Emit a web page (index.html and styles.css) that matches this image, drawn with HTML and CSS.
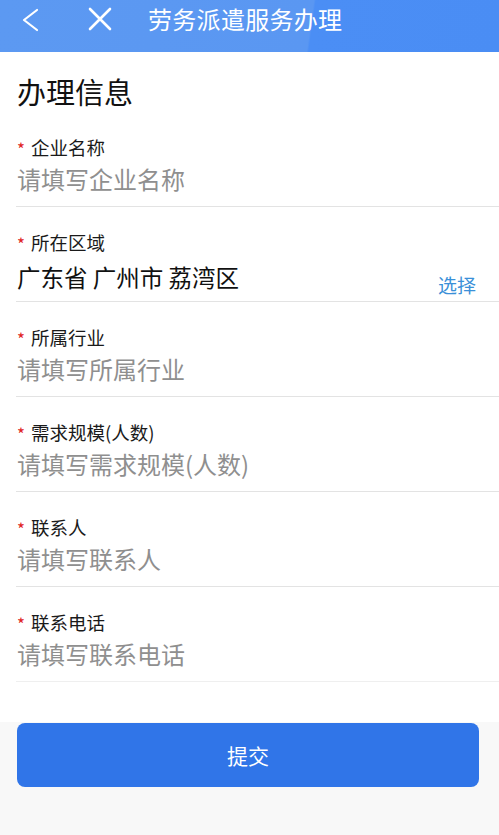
FILE: index.html
```html
<!DOCTYPE html>
<html lang="zh-CN">
<head>
<meta charset="utf-8">
<title>劳务派遣服务办理</title>
<link rel="stylesheet" href="styles.css">
</head>
<body>
<header class="topbar">
  <span class="icon back"><svg width="20" height="24" viewBox="0 0 20 24"><path d="M16 2 L3 12 L16 22" fill="none" stroke="#fff" stroke-width="2.2" stroke-linecap="round" stroke-linejoin="round"/></svg></span>
  <span class="icon close"><svg width="24" height="24" viewBox="0 0 24 24"><path d="M2 2 L22 22 M22 2 L2 22" fill="none" stroke="#fff" stroke-width="2.6" stroke-linecap="round"/></svg></span>
  <h1 class="topbar-title">劳务派遣服务办理</h1>
</header>
<main class="form">
  <h2 class="section-title">办理信息</h2>
  <div class="row">
    <div class="label"><span class="star">*</span>企业名称</div>
    <input class="field" type="text" placeholder="请填写企业名称">
  </div>
  <div class="row">
    <div class="label"><span class="star">*</span>所在区域</div>
    <div class="value-line">
      <span class="value">广东省 广州市 荔湾区</span>
      <span class="pick">选择</span>
    </div>
  </div>
  <div class="row">
    <div class="label"><span class="star">*</span>所属行业</div>
    <input class="field" type="text" placeholder="请填写所属行业">
  </div>
  <div class="row">
    <div class="label"><span class="star">*</span>需求规模(人数)</div>
    <input class="field" type="text" placeholder="请填写需求规模(人数)">
  </div>
  <div class="row">
    <div class="label"><span class="star">*</span>联系人</div>
    <input class="field" type="text" placeholder="请填写联系人">
  </div>
  <div class="row last">
    <div class="label"><span class="star">*</span>联系电话</div>
    <input class="field" type="text" placeholder="请填写联系电话">
  </div>
</main>
<div class="actions">
  <button class="submit" type="button">提交</button>
</div>
</body>
</html>
```

FILE: styles.css
```css
* { box-sizing: border-box; }
html, body { margin: 0; padding: 0; }
body {
  background: #f8f8f8;
  font-family: "Noto Sans CJK SC", "Noto Sans", sans-serif;
  color: #111;
  min-height: 835px;
}
.topbar {
  height: 52px;
  display: flex;
  align-items: center;
  background: linear-gradient(98deg, #5c99f2 0%, #5a97f2 62%, #4b8ef5 62.4%, #4a8df4 100%);
  color: #fff;
  padding-left: 21px;
}
.icon { display: flex; align-items: center; }
.back { width: 20px; height: 24px; margin-top: -12px; }
.close { width: 24px; height: 24px; margin-left: 47px; margin-top: -14px; }
.topbar-title {
  margin: -14px 0 0 36px;
  font-size: 24px;
  font-weight: 400;
  line-height: 30px;
  letter-spacing: 0.3px;
}
.form {
  background: #fff;
  padding-bottom: 40px;
}
.section-title {
  margin: 0;
  padding: 21px 17px 3px;
  font-size: 29px;
  font-weight: 400;
  line-height: 36px;
  color: #111;
}
.row {
  margin-left: 16px;
  padding: 22px 0 0 1px;
  height: 95px;
  border-bottom: 1px solid #e3e3e3;
}
.row.last { border-bottom-color: #efefef; }
.label {
  font-size: 18.5px;
  line-height: 26px;
  color: #1a1a1a;
  display: flex;
  align-items: flex-start;
}
.star {
  color: #e02424;
  font-size: 17px;
  line-height: 20px;
  width: 14px;
  margin-top: 5px;
}
.field {
  display: block;
  width: 100%;
  border: 0;
  outline: 0;
  padding: 0;
  margin-top: 1px;
  height: 34px;
  font-family: inherit;
  font-size: 24px;
  color: #111;
  background: transparent;
}
.field::placeholder { color: #8f8f8f; }
.value-line {
  display: flex;
  justify-content: space-between;
  align-items: flex-start;
  margin-top: 5px;
  padding-right: 23px;
}
.value {
  font-size: 23.5px;
  line-height: 34px;
  color: #111;
}
.pick {
  font-size: 19px;
  line-height: 26px;
  color: #3a90d8;
  margin-top: 12px;
}
.actions {
  padding: 1px 20px 0 17px;
}
.submit {
  display: block;
  width: 100%;
  height: 64px;
  border: 0;
  border-radius: 8px;
  background: #3075e8;
  color: #fff;
  font-family: inherit;
  font-size: 21px;
}
```
